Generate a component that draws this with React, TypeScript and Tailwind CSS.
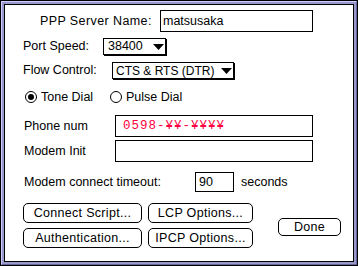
import React from "react";

const Tri = () => (
  <svg width="11" height="6" viewBox="0 0 11 6" className="shrink-0">
    <polygon points="0,0 11,0 5.5,6" fill="#000" />
  </svg>
);

const Radio = ({ on }: { on?: boolean }) => (
  <svg width="12" height="12" viewBox="0 0 12 12" className="shrink-0">
    <circle cx="6" cy="6" r="5.5" fill="#fff" stroke="#000" strokeWidth="1" />
    {on && <circle cx="6" cy="6" r="3" fill="#000" />}
  </svg>
);

const Btn = ({ w, children, h = 20 }: { w: string; children: React.ReactNode; h?: number }) => (
  <div
    className={`${w} border border-black rounded-[5px] flex items-center justify-center bg-white whitespace-nowrap tracking-[0.3px]`}
    style={{ height: h }}
  >
    {children}
  </div>
);

export default function App() {
  return (
    <div
      className="w-[358px] h-[266px] bg-black p-px text-black text-[12.5px] leading-none whitespace-nowrap"
      style={{ fontFamily: '"Liberation Sans", Arial, sans-serif' }}
    >
      <div className="h-full border border-t-[#ccccff] border-l-[#ccccff] border-r-[#666699] border-b-[#666699]">
        <div className="h-full border-2 border-[#9999cc]">
          <div className="h-full border border-black bg-white flex flex-col">
            {/* Row 1 */}
            <div className="mt-[5px] h-[22px] flex items-center pl-[35px]">
              <div className="w-[120px] tracking-[0.4px]">PPP Server Name:</div>
              <div className="w-[153px] h-[22px] border border-black flex items-center pl-[2px]">matsusaka</div>
            </div>
            {/* Row 2 */}
            <div className="mt-[6px] h-[18px] flex items-start pl-[18px]">
              <div className="w-[80px] h-[17px] flex items-center">Port Speed:</div>
              <div className="w-[63px] h-[17px] border border-black shadow-[1px_1px_0_#000] flex items-center justify-between pl-[4px] pr-[1px]">
                <span>38400</span>
                <Tri />
              </div>
            </div>
            {/* Row 3 */}
            <div className="mt-[6px] h-[18px] flex items-start pl-[18px]">
              <div className="w-[89px] h-[17px] flex items-center">Flow Control:</div>
              <div className="w-[122px] h-[17px] border border-black shadow-[1px_1px_0_#000] flex items-center justify-between pl-[3px] pr-[1px]">
                <span className="text-[12px]">CTS &amp; RTS (DTR)</span>
                <Tri />
              </div>
            </div>
            {/* Row 4 radios */}
            <div className="mt-[11px] h-[12px] flex items-center pl-[20px]">
              <Radio on />
              <span className="ml-[4px] w-[69px]">Tone Dial</span>
              <Radio />
              <span className="ml-[4px]">Pulse Dial</span>
            </div>
            {/* Row 5 */}
            <div className="mt-[12px] h-[22px] flex items-center pl-[19px]">
              <div className="w-[91px]">Phone num</div>
              <div
                className="w-[198px] h-[22px] border border-black flex items-center pl-[7px] text-[#ff0040] tracking-[1px]"
                style={{ fontFamily: '"Liberation Mono", monospace' }}
              >
                0598-¥¥-¥¥¥¥
              </div>
            </div>
            {/* Row 6 */}
            <div className="mt-[3px] h-[22px] flex items-center pl-[19px]">
              <div className="w-[91px]">Modem Init</div>
              <div className="w-[198px] h-[22px] border border-black" />
            </div>
            {/* Row 7 */}
            <div className="mt-[10px] h-[20px] flex items-center pl-[19px]">
              <div className="w-[171px]">Modem connect timeout:</div>
              <div className="w-[39px] h-[20px] border border-black flex items-center pl-[3px]">90</div>
              <span className="ml-[7px]">seconds</span>
            </div>
            {/* Buttons */}
            <div className="mt-[11px] flex pl-[18px]">
              <div className="flex flex-col gap-[5px]">
                <div className="flex gap-[6px]">
                  <Btn w="w-[119px]">Connect Script...</Btn>
                  <Btn w="w-[105px]">LCP Options...</Btn>
                </div>
                <div className="flex gap-[6px]">
                  <Btn w="w-[119px]">Authentication...</Btn>
                  <Btn w="w-[105px]">IPCP Options...</Btn>
                </div>
              </div>
              <div className="ml-[25px] mt-[15px]">
                <Btn w="w-[63px]" h={18}>Done</Btn>
              </div>
            </div>
          </div>
        </div>
      </div>
    </div>
  );
}
